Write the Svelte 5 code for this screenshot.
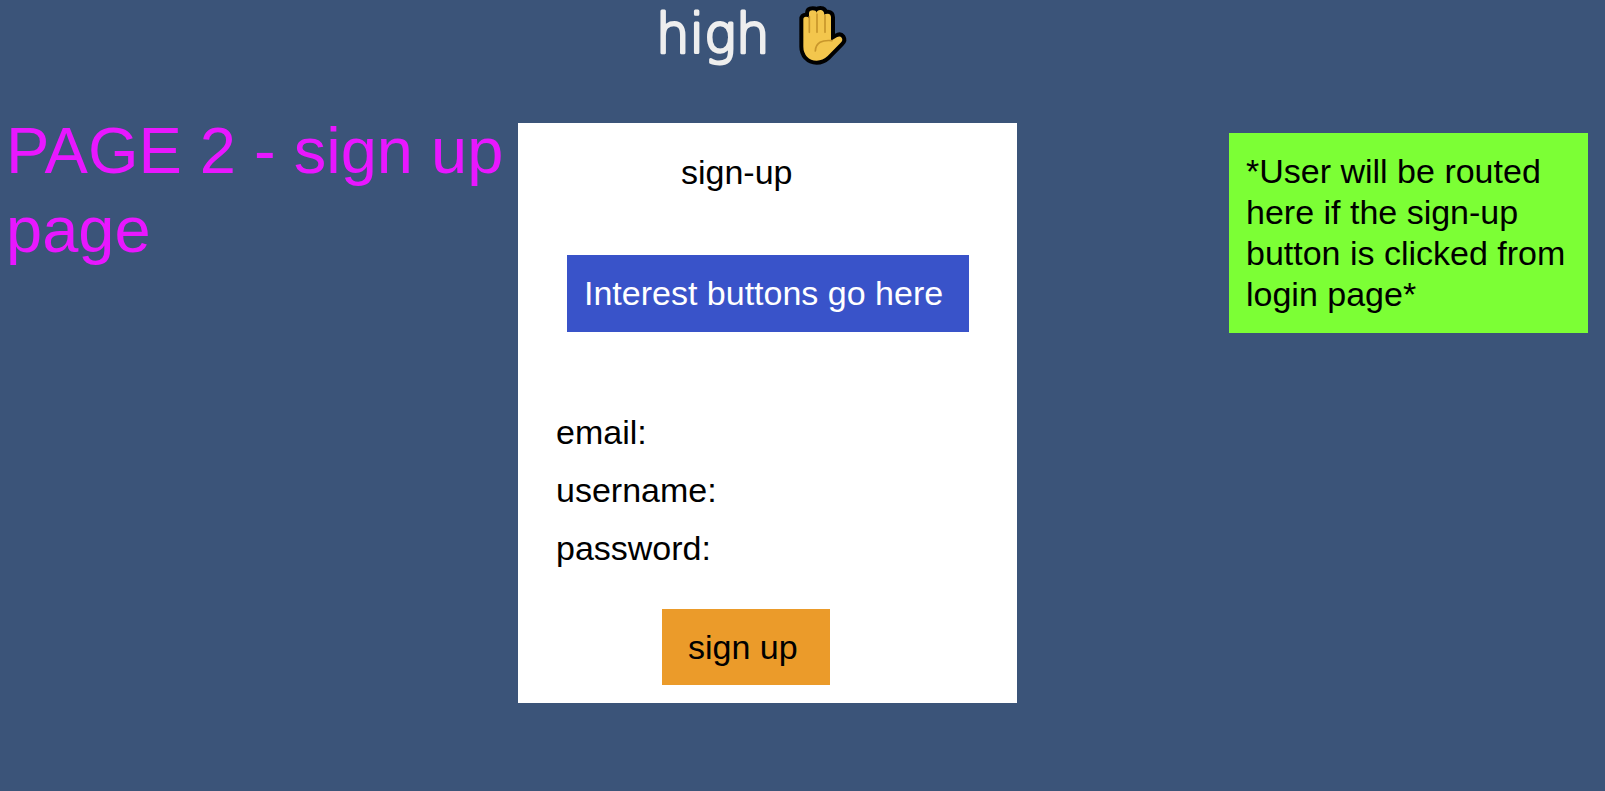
<script>
  let form = $state({ email: '', username: '', password: '' });

  const fields = [
    { name: 'email', type: 'email' },
    { name: 'username', type: 'text' },
    { name: 'password', type: 'password' }
  ];
</script>

<div class="page">
  <header class="brand">
    <svg class="brand-name" viewBox="0 0 136 70">
      <text x="2" y="52">high</text>
    </svg>
    <svg class="hand" viewBox="0 0 192 210" aria-hidden="true">
      <path
        class="palm"
        d="M40 58 Q40 50 48 50 Q54 50 57 54 V40 Q57 31 68 31 Q78 31 80 38 Q81 30 91 30 Q102 30 103 44 Q106 41 113 41 Q123 42 123 52 V122 L140 112 Q150 106 155 113 Q160 121 152 128 L113 168 Q98 182 80 182 Q62 182 51 170 Q40 157 40 140 Z"
      />
      <path class="crease" d="M58 50 V97 M81 42 V97 M105 47 V97 M76 153 C77 128 96 119 126 122" />
    </svg>
  </header>

  <h1 class="title">PAGE 2 - sign up page</h1>

  <main class="card">
    <h2>sign-up</h2>
    <div class="interests">Interest buttons go here</div>
    <form onsubmit={(e) => e.preventDefault()}>
      {#each fields as field}
        <div class="field">
          <label for={field.name}>{field.name}:</label>
          <input id={field.name} type={field.type} bind:value={form[field.name]} />
        </div>
      {/each}
      <button type="submit">sign up</button>
    </form>
  </main>

  <aside class="note">*User will be routed here if the sign-up button is clicked from login page*</aside>
</div>

<style>
  :global(body) {
    margin: 0;
    background: #3b5479;
  }

  .page {
    display: grid;
    grid-template-columns: minmax(0, 518fr) minmax(0, 499fr) minmax(0, 588fr);
    grid-template-rows: 110px auto;
    align-items: start;
    box-sizing: border-box;
    min-height: 100vh;
    font-family: 'Liberation Sans', Arial, sans-serif;
    font-size: 34px;
    line-height: 41px;
    color: #000;
  }

  .brand {
    grid-column: 2;
    display: flex;
    padding-left: 136px;
  }

  .brand-name {
    flex: none;
    width: 136px;
    height: 70px;
    font-family: 'DejaVu Sans', sans-serif;
    font-size: 53px;
    font-weight: 200;
    fill: #eee;
    stroke: #eee;
    stroke-width: 3;
    stroke-linejoin: round;
  }

  .hand {
    flex: none;
    width: 64px;
    height: 70px;
  }

  .palm {
    fill: #f3c64d;
    stroke: #000;
    stroke-width: 24;
    stroke-linejoin: round;
    paint-order: stroke;
  }

  .crease {
    fill: none;
    stroke: #c8962c;
    stroke-width: 5;
    stroke-linecap: round;
  }

  h1,
  h2 {
    margin: 0;
    font-weight: 400;
  }

  .title {
    grid-row: 2;
    grid-column: 1;
    padding: 1px 0 0 6px;
    font-size: 65px;
    line-height: 79px;
    color: #e817ff;
  }

  .card {
    grid-row: 2;
    grid-column: 2;
    display: flex;
    flex-direction: column;
    margin-top: 13px;
    padding: 29px 48px 18px 38px;
    background: #fff;
  }

  h2 {
    padding-left: 125px;
    font-size: 34px;
  }

  .interests {
    margin: 62px 0 80px 11px;
    padding: 18px 17px;
    background: #3953c9;
    color: #fff;
  }

  form {
    display: flex;
    flex-direction: column;
    gap: 17px;
  }

  .field {
    display: flex;
    gap: 12px;
  }

  input {
    flex: 1;
    min-width: 0;
    padding: 0;
    border: 0;
    outline: 0;
    background: transparent;
    font: inherit;
  }

  button {
    align-self: flex-start;
    margin: 23px 0 0 106px;
    padding: 18px 32px 17px 26px;
    border: 0;
    background: #eb9b2a;
    color: #000;
    font: inherit;
    cursor: pointer;
  }

  .note {
    grid-row: 2;
    grid-column: 3;
    justify-self: end;
    box-sizing: border-box;
    width: 359px;
    margin: 23px 17px 0 0;
    padding: 18px 17px;
    background: #7cff35;
  }
</style>
